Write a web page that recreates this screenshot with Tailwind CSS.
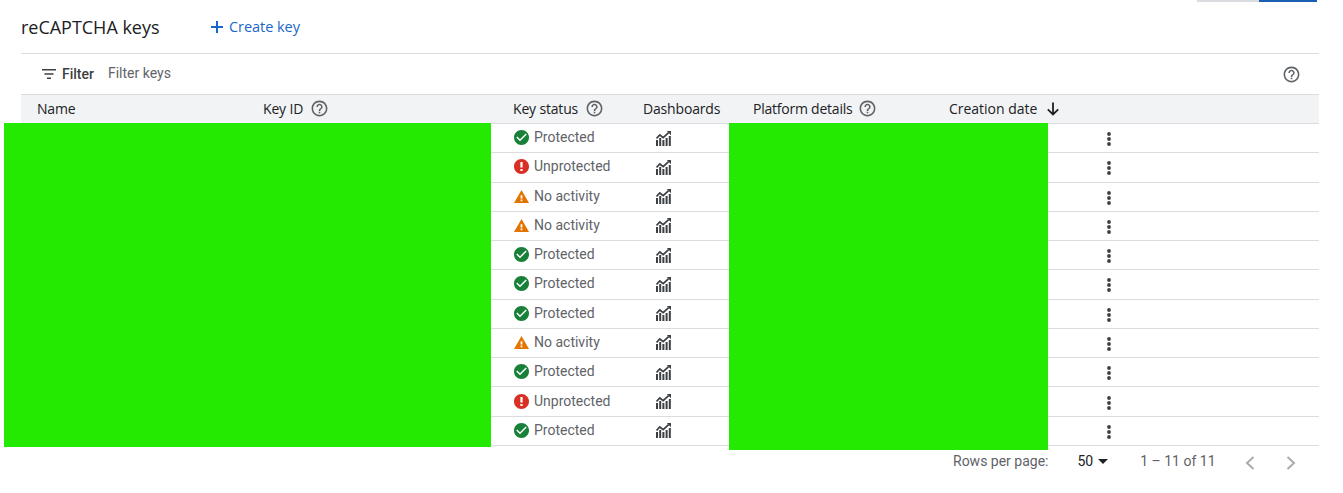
<!DOCTYPE html>
<html lang="en">
<head>
  <meta charset="UTF-8">
  <title>reCAPTCHA keys</title>
  <script src="https://cdn.jsdelivr.net/npm/@tailwindcss/browser@4"></script>
</head>
<body class="bg-white font-['Roboto',sans-serif] text-[#202124] overflow-hidden">
  <div class="relative w-[1343px] h-[493px] overflow-hidden">
    <!-- tabs cut off at the top -->
    <div class="flex h-[2px] ml-[1197px] w-[120px]">
      <div class="w-[62px] bg-[#dadce0]"></div>
      <div class="w-[58px] bg-[#1a5fb4]"></div>
    </div>

    <div class="ml-[21px] w-[1298px]">
      <div class="flex items-center h-[52px] border-b border-[#dadce0] pb-[1px]">
        <h1 class="text-[18px] leading-6 w-[188px] font-['Open_Sans',sans-serif] tracking-[-0.02px] -mt-[1px]">reCAPTCHA keys</h1>
        <button class="flex items-center text-[14.5px] -mt-[1px] font-['Open_Sans',sans-serif] font-medium text-[#1a67c9] tracking-[-0.05px]">
          <svg class="w-[16px] h-[16px] mr-[4px] mt-[1px]" viewBox="0 0 16 16" fill="none" stroke="#1a67c9" stroke-width="2"><path d="M8 2v12M2 8h12"/></svg>
          Create key
        </button>
      </div>

      <div class="flex items-center h-[41px] border-b border-[#dadce0]">
        <svg class="ml-[20px] w-[16px] h-[12px]" viewBox="0 0 16 12" fill="#3c4043"><path d="M1 1h14v1.6H1zM3.5 5.2h9v1.6h-9zM6 9.4h4V11H6z"/></svg>
        <span class="ml-[5px] text-[14px] font-medium text-[#3c4043]">Filter</span>
        <span class="ml-[14px] text-[14px] text-[#5f6368] -mt-[2px]">Filter keys</span>
        <svg class="ml-auto mr-[18px] w-[19px] h-[19px]" viewBox="0 0 24 24" fill="#5f6368"><path d="M11 18h2v-2h-2v2zm1-16C6.48 2 2 6.48 2 12s4.48 10 10 10 10-4.48 10-10S17.52 2 12 2zm0 18c-4.41 0-8-3.59-8-8s3.59-8 8-8 8 3.59 8 8-3.59 8-8 8zm0-14c-2.21 0-4 1.79-4 4h2c0-1.1.9-2 2-2s2 .9 2 2c0 2-3 1.75-3 5h2c0-2.25 3-2.5 3-5 0-2.21-1.79-4-4-4z"/></svg>
      </div>

      <div class="flex items-center h-[29px] bg-[#f1f3f4] border-b border-[#dadce0] text-[14px] font-['Open_Sans',sans-serif] tracking-[-0.17px] text-[#202124]">
        <div class="w-[242px] pl-[16px] -mt-[1px]">Name</div>
        <div class="w-[250px] flex items-center gap-[7px] -mt-[1px]">Key ID
          <svg class="w-[19px] h-[19px]" viewBox="0 0 24 24" fill="#5f6368"><path d="M11 18h2v-2h-2v2zm1-16C6.48 2 2 6.48 2 12s4.48 10 10 10 10-4.48 10-10S17.52 2 12 2zm0 18c-4.41 0-8-3.59-8-8s3.59-8 8-8 8 3.59 8 8-3.59 8-8 8zm0-14c-2.21 0-4 1.79-4 4h2c0-1.1.9-2 2-2s2 .9 2 2c0 2-3 1.75-3 5h2c0-2.25 3-2.5 3-5 0-2.21-1.79-4-4-4z"/></svg>
        </div>
        <div class="w-[130px] flex items-center gap-[7px] -mt-[1px]">Key status
          <svg class="w-[19px] h-[19px]" viewBox="0 0 24 24" fill="#5f6368"><path d="M11 18h2v-2h-2v2zm1-16C6.48 2 2 6.48 2 12s4.48 10 10 10 10-4.48 10-10S17.52 2 12 2zm0 18c-4.41 0-8-3.59-8-8s3.59-8 8-8 8 3.59 8 8-3.59 8-8 8zm0-14c-2.21 0-4 1.79-4 4h2c0-1.1.9-2 2-2s2 .9 2 2c0 2-3 1.75-3 5h2c0-2.25 3-2.5 3-5 0-2.21-1.79-4-4-4z"/></svg>
        </div>
        <div class="w-[110px] -mt-[1px]">Dashboards</div>
        <div class="w-[196px] flex items-center gap-[6px] -mt-[1px] tracking-[-0.23px]">Platform details
          <svg class="w-[19px] h-[19px]" viewBox="0 0 24 24" fill="#5f6368"><path d="M11 18h2v-2h-2v2zm1-16C6.48 2 2 6.48 2 12s4.48 10 10 10 10-4.48 10-10S17.52 2 12 2zm0 18c-4.41 0-8-3.59-8-8s3.59-8 8-8 8 3.59 8 8-3.59 8-8 8zm0-14c-2.21 0-4 1.79-4 4h2c0-1.1.9-2 2-2s2 .9 2 2c0 2-3 1.75-3 5h2c0-2.25 3-2.5 3-5 0-2.21-1.79-4-4-4z"/></svg>
        </div>
        <div class="flex items-center gap-[8px] -mt-[1px] tracking-[-0.02px]">Creation date
          <svg class="w-[16px] h-[16px]" viewBox="0 0 16 16" fill="none" stroke="#202124" stroke-width="1.8"><path d="M8 1.5v11.5M2.8 8.4 8 13.4l5.2-5"/></svg>
        </div>
      </div>

      <div id="filas"></div>

      <div class="flex items-center h-[32px] text-[14px] text-[#5f6368]">
        <span class="ml-[932px]">Rows per page:</span>
        <span class="ml-[29px] text-[#202124]">50</span>
        <svg class="ml-[5px] w-[10px] h-[5px]" viewBox="0 0 10 5" fill="#202124"><path d="M0 0h10L5 5z"/></svg>
        <span class="ml-[32px]">1 – 11 of 11</span>
        <svg class="ml-[28px] w-[12px] h-[16px] mt-[2px]" viewBox="0 0 12 16" fill="none" stroke="#a8abaf" stroke-width="2"><path d="M9.5 2 3 8l6.5 6"/></svg>
        <svg class="ml-[29px] w-[12px] h-[16px] mt-[2px]" viewBox="0 0 12 16" fill="none" stroke="#a8abaf" stroke-width="2"><path d="M2.5 2 9 8l-6.5 6"/></svg>
      </div>
    </div>

    <!-- redacted areas -->
    <div class="absolute left-[4px] top-[123px] w-[487px] h-[324px] bg-[#24e900]"></div>
    <div class="absolute left-[729px] top-[123px] w-[319px] h-[327px] bg-[#24e900]"></div>
  </div>

  <script>
    const ICONOS = {
      Protected: '<svg class="w-[15px] h-[15px]" viewBox="2 2 20 20" fill="#188038"><path d="M12 2C6.48 2 2 6.48 2 12s4.48 10 10 10 10-4.48 10-10S17.52 2 12 2zm-2 15l-5-5 1.41-1.41L10 14.17l7.59-7.59L19 8l-9 9z"/></svg>',
      Unprotected: '<svg class="w-[15px] h-[15px]" viewBox="2 2 20 20" fill="#d93025"><path d="M12 2C6.48 2 2 6.48 2 12s4.48 10 10 10 10-4.48 10-10S17.52 2 12 2zm1.5 16h-3v-2.6h3V18zm0-4.6h-3V6h3v7.4z"/></svg>',
      'No activity': '<svg class="w-[15px] h-[15px]" viewBox="1 2 22 19" fill="#e37400"><path d="M1 21h22L12 2 1 21zm12.3-2.4h-2.6V16h2.6v2.6zm0-4h-2.6V9.5h2.6v5.1z"/></svg>'
    };
    const GRAFICO = '<svg class="w-[15px] h-[15px]" viewBox="0 0 15 15" fill="#3c4043"><path d="M0 9h2v6H0zM3.2 7h2v8h-2zM6.4 9h2v6h-2zM9.6 7h2v8h-2zM12.8 5h2v10h-2z"/><path d="M.5 7.4 3.8 4l3.4 2.6L12.6 1.6" fill="none" stroke="#3c4043" stroke-width="1.7"/><path d="M10.8 0H15v4.2z"/></svg>';
    const PUNTOS = '<svg class="w-[4px] h-[14px]" viewBox="0 0 4 14" fill="#3c4043"><circle cx="2" cy="2" r="1.9"/><circle cx="2" cy="7" r="1.9"/><circle cx="2" cy="12" r="1.9"/></svg>';

    const estados = ['Protected', 'Unprotected', 'No activity', 'No activity', 'Protected', 'Protected', 'Protected', 'No activity', 'Protected', 'Unprotected', 'Protected'];

    document.getElementById('filas').innerHTML = estados.map(estado => `
      <div class="flex items-center h-[29.27px] border-b border-[#dadce0] box-border">
        <div class="ml-[493px] w-[129px] flex items-center gap-[5px] text-[14px] text-[#5f6368] -mt-[1px]">${ICONOS[estado]}<span>${estado}</span></div>
        <div class="ml-[13px] w-[16px] h-[15px]">${GRAFICO}</div>
        <div class="ml-[435px] w-[4px] h-[14px] mt-[2px]">${PUNTOS}</div>
      </div>`).join('');
  </script>
</body>
</html>
